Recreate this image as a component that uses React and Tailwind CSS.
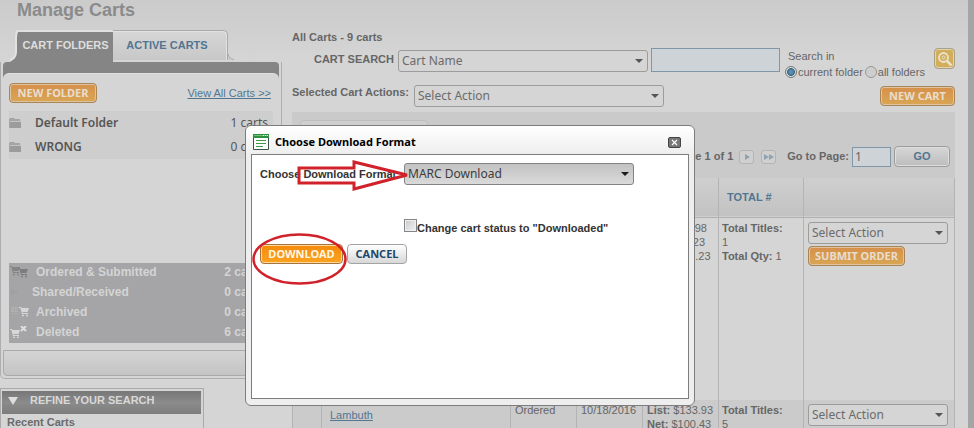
import React from "react";

const SANS = "font-['Liberation_Sans',Arial,sans-serif]";
const HUMAN = "font-['Noto_Sans','Open_Sans',sans-serif]";

function Select({ id, label, value, className = "", tone = "page" }) {
  const modal = tone === "modal";
  return (
    <div className={`relative ${className}`}>
      <select
        id={id}
        aria-label={label}
        defaultValue={value}
        className={`block h-[22px] w-full appearance-none rounded-[3px] border pr-5 pl-[3px] text-[12px] leading-5 outline-none ${HUMAN} ${
          modal
            ? "border-[#848484] bg-linear-to-b from-[#c2c2c2] to-[#dadada] text-[#3c3c3c]"
            : "border-[#9c9c9c] bg-[#d5d5d5] text-[#6b6b6b]"
        }`}
      >
        <option>{value}</option>
      </select>
      <svg viewBox="0 0 8 4" className={`pointer-events-none absolute top-[9px] right-[5px] h-1 w-2 ${modal ? "text-[#1c1c1c]" : "text-[#555]"}`}>
        <path d="M0 0h8L4 4z" fill="currentColor" />
      </svg>
    </div>
  );
}

function OrangeButton({ children, className = "", bright = false }) {
  return (
    <button
      type="button"
      className={`h-5 shrink-0 rounded-[4px] border text-[11px] leading-4 font-bold whitespace-nowrap ${HUMAN} ${
        bright
          ? "border-[#a8733a] bg-linear-to-b from-[#f58a0a] to-[#fba31e] text-[#fff6e4] shadow-[inset_0_0_0_1px_#fbd9a0]"
          : "border-[#a98558] bg-linear-to-b from-[#d6904a] to-[#d9a654] text-[#e8ddcf] shadow-[inset_0_0_0_1px_#dcc4a0]"
      } ${className}`}
    >
      {children}
    </button>
  );
}

function FolderIcon() {
  return (
    <svg viewBox="0 0 12 10" className="h-[10px] w-3 shrink-0">
      <path d="M0 10V1l1-1h4l1 1h5v2H2v7z" fill="#a5a5a5" />
      <path d="M1 3h11v7H1z" fill="#9b9b9b" />
      <path d="M1 3.5h11" stroke="#c4c4c4" />
    </svg>
  );
}

function CartGlyph({ x = 0, y = 0, color }) {
  return (
    <g transform={`translate(${x} ${y})`} fill={color}>
      <path d="M0 0h2l.6 1H10L8.600 5H3.400l.3 1H9v1H3L1.400 1H0z" />
      <circle cx="4" cy="8.500" r="1" />
      <circle cx="8" cy="8.500" r="1" />
    </g>
  );
}

function StatusIcon({ kind }) {
  return (
    <svg viewBox="0 0 20 12" className="h-3 w-5 shrink-0">
      {kind === "ordered" && (
        <>
          <CartGlyph x={1} color="#858585" />
          <CartGlyph x={9} y={2} color="#7d7d7d" />
        </>
      )}
      {kind === "shared" && <path d="M2 3h3v2h3v3H4v1H2z" fill="#a0a0a2" />}
      {kind === "archived" && (
        <>
          <path d="M2 2h7M2 5h7M4 1v7M7 1v7" stroke="#bcbcbc" strokeDasharray="1 1" />
          <CartGlyph x={10} y={1} color="#d6d6d6" />
        </>
      )}
      {kind === "deleted" && (
        <>
          <CartGlyph x={1} y={3} color="#d8d8d8" />
          <path d="M12 0l5 5M17 0l-5 5" stroke="#dedede" strokeWidth="2" />
        </>
      )}
    </svg>
  );
}

const folders = [
  { name: "Default Folder", count: "1 carts" },
  { name: "WRONG", count: "0 carts" },
];

const statuses = [
  { kind: "ordered", name: "Ordered & Submitted", count: "2 carts", pad: "pl-[7px]" },
  { kind: "shared", name: "Shared/Received", count: "0 carts", pad: "pl-[3px]" },
  { kind: "archived", name: "Archived", count: "0 carts", pad: "pl-[7px]" },
  { kind: "deleted", name: "Deleted", count: "6 carts", pad: "pl-[7px]" },
];

function Sidebar() {
  return (
    <aside className="w-[282px] shrink-0">
      <h1 className="pl-[17px] text-[18px] leading-5 font-bold text-[#8b8b8b]">Manage Carts</h1>
      <nav className="mt-[10px] flex h-8 pl-[10px]">
        <svg viewBox="0 0 8 32" className="h-8 w-2 shrink-0">
          <path d="M8 32V2Q6 4 6 8v15q0 6-6 9z" fill="#858585" />
          <path d="M8 .5Q6 2 6 8v14q0 6-6 8" fill="none" stroke="#e2e2e2" strokeWidth="2" />
        </svg>
        <button type="button" className="w-[95px] border-t-2 border-[#e0e0e0] bg-[#858585] pb-1 text-[11px] font-bold whitespace-nowrap text-[#dedede]">
          CART FOLDERS
        </button>
        <button type="button" className="h-[30px] w-[115px] rounded-tr-[5px] border-t border-r border-[#a9a9a9] bg-linear-to-b from-[#d6d6d6] to-[#c8c8c8] pr-[6px] text-[11px] font-bold whitespace-nowrap text-[#527591] shadow-[inset_-1px_1px_0_#e2e2e2]">
          ACTIVE CARTS
        </button>
        <svg viewBox="0 0 6 30" className="h-[30px] w-[6px] shrink-0">
          <path d="M0 24q1 5 6 5.500H0z" fill="#cbcbcb" />
          <path d="M0 24q1 5 6 5.500" fill="none" stroke="#a9a9a9" />
        </svg>
      </nav>
      <section className="rounded-b-[5px] border border-t-0 border-[#aeaeae] px-[2px] pb-[2px]">
        <div className="rounded-t-[4px] bg-[#858585] pt-[11px]">
          <div className="rounded-t-[6px] border-t border-[#e0e0e0] bg-[#d5d5d5] px-[6px] pb-[7px]">
            <div className="flex items-center justify-between pt-[9px] pr-[2px]">
              <OrangeButton className="w-[88px]">NEW FOLDER</OrangeButton>
              <a href="#all" className="text-[11px] leading-4 whitespace-nowrap text-[#527591] underline">View All Carts &gt;&gt;</a>
            </div>
            <ul className={`mt-2 bg-[#cecece] text-[12px] text-[#565656] ${HUMAN}`}>
              {folders.map((f) => (
                <li key={f.name} className="flex h-6 items-center pr-[5px]">
                  <FolderIcon />
                  <span className="flex-1 pl-[14px] font-semibold">{f.name}</span>
                  <span>{f.count}</span>
                </li>
              ))}
            </ul>
            <ul className="mt-[104px] bg-[#a5a5a7] text-[12px] font-bold text-[#d4d4d4]">
              {statuses.map((s) => (
                <li key={s.kind} className="flex h-5 items-center pr-[10px] pb-[3px]">
                  <StatusIcon kind={s.kind} />
                  <span className={`flex-1 ${s.pad}`}>{s.name}</span>
                  <span>{s.count}</span>
                </li>
              ))}
            </ul>
          </div>
        </div>
        <div className="h-[26px] rounded-b-[4px] border border-[#aaa] bg-linear-to-b from-[#d4d4d4] to-[#c4c4c4]" />
      </section>
      <section className="mt-[9px] w-[204px] border border-[#aaa] pl-px">
        <h2 className="mt-[2px] mr-[2px] flex h-[23px] items-center bg-linear-to-b from-[#777] via-[#8b8b8b] to-[#7d7d7d] pb-1 pl-[6px] text-[11px] text-[#d8d8d8]">
          <svg viewBox="0 0 10 8" className="h-2 w-[10px]">
            <path d="M0 0h10L5 8z" fill="#dedede" />
          </svg>
          <span className="pl-3 font-bold">REFINE YOUR SEARCH</span>
        </h2>
        <p className="pl-[5px] text-[11px] leading-4 font-bold text-[#6b6b6b]">Recent Carts</p>
      </section>
    </aside>
  );
}

function SearchPanel() {
  return (
    <>
      <h2 className="pt-[29px] text-[11px] leading-4 font-bold">All Carts - 9 carts</h2>
      <div className="mt-[3px] flex items-start">
        <label htmlFor="field" className="w-[106px] pt-[3px] pr-1 text-right text-[11px] leading-4 font-bold whitespace-nowrap">CART SEARCH</label>
        <Select id="field" value="Cart Name" className="mt-[2px] w-[250px]" />
        <input aria-label="Search text" className="ml-[3px] h-6 w-[129px] border border-[#7f97a6] bg-[#cdd3d6] px-1 outline-none" />
        <fieldset className="ml-[5px] text-[11px] whitespace-nowrap">
          <legend className="pl-[3px] leading-4">Search in</legend>
          <div className="flex items-center">
            <input id="current" type="radio" name="scope" defaultChecked className="h-3 w-3 appearance-none rounded-full border border-[#777] bg-[#d3d9dd] bg-radial from-[#5c8fae] from-20% via-[#3f6a86] via-50% to-[#d3d9dd] to-60%" />
            <label htmlFor="current" className="pl-px leading-4">current folder</label>
            <input id="all" type="radio" name="scope" className="ml-[2px] h-3 w-3 appearance-none rounded-full border border-[#999] bg-[#cecece]" />
            <label htmlFor="all" className="pl-px leading-4">all folders</label>
          </div>
        </fieldset>
        <button type="button" aria-label="Search" className="ml-auto flex h-[21px] w-[21px] items-center justify-center rounded-[4px] border border-[#aaa083] bg-[#d3ad58] shadow-[inset_0_0_0_1px_#dfd4b8]">
          <svg viewBox="0 0 16 16" className="h-4 w-4" fill="none" stroke="#e8e2d2">
            <circle cx="6.500" cy="6.500" r="4.500" strokeWidth="1.800" />
            <circle cx="6.500" cy="6.500" r="1.500" />
            <path d="M10 10l4.500 4.500" strokeWidth="2.500" />
          </svg>
        </button>
      </div>
      <div className="mt-1 flex items-start">
        <label htmlFor="bulk" className="w-[122px] pt-px text-[11px] leading-[14px] font-bold whitespace-nowrap">Selected Cart Actions:</label>
        <Select id="bulk" value="Select Action" className="mt-px w-[250px]" />
        <OrangeButton className="mt-[2px] ml-auto w-[75px]">NEW CART</OrangeButton>
      </div>
    </>
  );
}

function Pager() {
  return (
    <div className="mt-[5px] h-[66px] bg-[#cacaca] px-[5px] pt-2">
      <div className="ml-[3px] h-5 w-32 rounded-[4px] border border-[#bdbdbd] bg-[#cfcfcf]" />
      <div className="mt-[6px] flex items-center justify-end text-[11px]">
        <span className="font-bold">Page 1 of 1</span>
        <button type="button" aria-label="Next page" className="ml-[6px] flex h-[14px] w-[15px] items-center justify-center rounded-[3px] border border-[#b4b4b4] bg-[#d0d0d0]">
          <svg viewBox="0 0 6 6" className="h-[6px] w-[6px]"><path d="M1 0l5 3-5 3z" fill="#8fa3b0" /></svg>
        </button>
        <button type="button" aria-label="Last page" className="ml-[7px] flex h-[14px] w-[15px] items-center justify-center rounded-[3px] border border-[#b4b4b4] bg-[#d0d0d0]">
          <svg viewBox="0 0 10 6" className="h-[6px] w-[10px]"><path d="M0 0l5 3-5 3zM5 0l5 3-5 3z" fill="#8fa3b0" /></svg>
        </button>
        <label htmlFor="page" className="ml-[11px] font-bold">Go to Page:</label>
        <input id="page" defaultValue="1" className={`ml-[3px] h-5 w-[39px] border border-[#7f97a6] bg-[#cdd3d6] px-[2px] text-[12px] outline-none ${HUMAN}`} />
        <button type="button" className="ml-[3px] h-[21px] w-14 rounded-[4px] border border-[#9c9c9c] bg-linear-to-b from-[#d6d6d6] to-[#bdbdbd] text-[11px] font-bold text-[#527591] shadow-[inset_0_0_0_1px_#dedede]">GO</button>
      </div>
    </div>
  );
}

const CELL = "border-x border-[#b4b4b4] align-top";

function CartTable() {
  return (
    <table className="w-full table-fixed border-collapse text-left text-[11px] leading-[14px]">
      <colgroup>
        <col className="w-[29px]" />
        <col />
        <col className="w-[66px]" />
        <col className="w-[66px]" />
        <col className="w-[76px]" />
        <col className="w-[85px]" />
        <col className="w-[151px]" />
      </colgroup>
      <thead>
        <tr className="h-[39px] border-b border-[#b0b0b0] bg-linear-to-b from-[#cfcfcf] to-[#c2c2c2] text-[#527591]">
          <th className={CELL} />
          <th className={`${CELL} pt-3 pl-2`}>CART NAME</th>
          <th className={`${CELL} pt-3 pl-1`}>STATUS</th>
          <th className={`${CELL} pt-3 pl-1`}>DATE</th>
          <th className={`${CELL} pt-3 pl-1`}>PRICES</th>
          <th className={`${CELL} pt-3 pl-2`}>TOTAL #</th>
          <th className={CELL} />
        </tr>
      </thead>
      <tbody>
        <tr className="h-[183px]">
          <td className={CELL} />
          <td className={CELL} />
          <td className={CELL} />
          <td className={CELL} />
          <td className={`${CELL} pt-[3px] pl-1 whitespace-nowrap`}>
            <b>List:</b> $36.98<br /><b>Net:</b> $27.23<br /><b>Disc:</b> $27.23
          </td>
          <td className={`${CELL} pt-[3px] pl-[3px]`}>
            <b>Total Titles:</b><br />1<br /><b>Total Qty:</b> 1
          </td>
          <td className={`${CELL} pt-1 pl-1`}>
            <Select label="Cart action" value="Select Action" className="w-[140px]" />
            <OrangeButton className="mt-[2px] w-[97px]">SUBMIT ORDER</OrangeButton>
          </td>
        </tr>
        <tr className="h-[60px] bg-[#cbcbcb]">
          <td className={CELL} />
          <td className={`${CELL} pt-2 pl-2`}><a href="#lambuth" className="text-[#527591] underline">Lambuth</a></td>
          <td className={`${CELL} pt-[3px] pl-1`}>Ordered</td>
          <td className={`${CELL} pt-[3px] pl-1`}>10/18/2016</td>
          <td className={`${CELL} pt-[3px] pl-1 whitespace-nowrap`}>
            <b>List:</b> $133.93<br /><b>Net:</b> $100.43
          </td>
          <td className={`${CELL} pt-[3px] pl-[3px]`}><b>Total Titles:</b><br />5</td>
          <td className={`${CELL} pt-1 pl-1`}>
            <Select label="Cart action" value="Select Action" className="w-[140px]" />
          </td>
        </tr>
      </tbody>
    </table>
  );
}

function DownloadDialog() {
  return (
    <div role="dialog" aria-labelledby="dialog-title" className="absolute top-[125px] left-[245px] w-[450px] rounded-[6px] border border-[#7d7d7d] bg-[#eee] bg-linear-to-b from-white to-[#eee] to-[29px] px-[5px] pb-[6px] text-[#333]">
      <header className="flex h-7 items-center pt-1 pr-2 pl-[2px]">
        <svg viewBox="0 0 16 16" className="h-4 w-4 shrink-0">
          <path d="M.5.5h15v15H.5z" fill="#fff" stroke="#3d5345" />
          <path d="M0 0h16v4H0z" fill="#2f8f3e" />
          <path d="M1 1h14v1H1z" fill="#6fc176" />
          <path d="M10 1h1v1h-1zM12 1h1v1h-1zM14 1h1v1h-1z" fill="#fff" />
          <path d="M3 6.500h10M3 9.500h10M3 12.500h7" stroke="#3f9a4c" />
        </svg>
        <h2 id="dialog-title" className={`flex-1 pl-[6px] text-[11px] font-bold text-black ${HUMAN}`}>Choose Download Format</h2>
        <button type="button" aria-label="Close" className="flex h-[11px] w-[13px] items-center justify-center rounded-[2px] border border-[#444] bg-[#777]">
          <svg viewBox="0 0 7 7" className="h-[7px] w-[7px] shrink-0"><path d="M1 1l5 5M6 1L1 6" stroke="#fff" strokeWidth="1.200" /></svg>
        </button>
      </header>
      <form className="min-h-[245px] border border-[#7d7d7d] bg-white px-2 pt-2 text-[11px]">
        <div className="flex items-center">
          <label htmlFor="format" className="w-36 font-bold whitespace-nowrap">Choose Download Format</label>
          <Select id="format" value="MARC Download" className="w-[230px]" tone="modal" />
        </div>
        <div className="mt-[34px] flex items-start pl-36">
          <input id="status" type="checkbox" className="h-[13px] w-[13px] appearance-none border border-[#858585] bg-linear-to-br from-[#c6c9cc] to-[#f4f4f4] shadow-[inset_0_0_0_1px_#f0f0f0]" />
          <label htmlFor="status" className="pt-px leading-4 font-bold whitespace-nowrap">Change cart status to &quot;Downloaded&quot;</label>
        </div>
        <div className="mt-2 flex gap-1">
          <OrangeButton bright className="w-[83px]">DOWNLOAD</OrangeButton>
          <button type="button" className={`h-5 w-[60px] rounded-[4px] border border-[#a3a3a3] bg-linear-to-b from-white to-[#d8d8d8] text-[11px] leading-4 font-bold text-[#1b476c] ${HUMAN}`}>CANCEL</button>
        </div>
      </form>
    </div>
  );
}

function Annotations() {
  return (
    <svg viewBox="0 0 162 130" className="pointer-events-none absolute top-[157px] left-[250px] h-[130px] w-[162px]" fill="none" stroke="#d1222b">
      <path d="M49 11h55V5l53 13-53 14v-6H49z" strokeWidth="3" />
      <ellipse cx="49.500" cy="102" rx="46" ry="24.500" strokeWidth="2.500" />
    </svg>
  );
}

export default function App() {
  return (
    <div className={`relative h-screen overflow-hidden border-r-[6px] border-[#a5a5a7] bg-[#d5d5d5] bg-linear-to-b from-[#cbcbcb] to-[#d5d5d5] to-[60px] text-[#666] ${SANS}`}>
      <div className="flex gap-[10px]">
        <Sidebar />
        <main className="min-w-0 flex-1 pr-[13px]">
          <SearchPanel />
          <Pager />
          <CartTable />
        </main>
      </div>
      <DownloadDialog />
      <Annotations />
    </div>
  );
}
